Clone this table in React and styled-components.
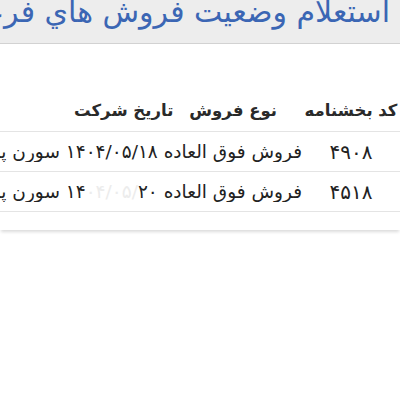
import React from 'react';
import styled, { createGlobalStyle } from 'styled-components';

const GlobalStyle = createGlobalStyle`
  html, body {
    margin: 0;
    padding: 0;
    background: #ffffff;
    overflow: hidden;
    font-family: "DejaVu Sans", sans-serif;
  }
`;

const Page = styled.div`
  width: 400px;
  height: 400px;
  overflow: hidden;
  direction: rtl;
  background: #ffffff;
`;

const Header = styled.header`
  height: 43px;
  background: #ededed;
  border-bottom: 1px solid #d2d2d2;
  overflow: hidden;
  padding-right: 10px;
`;

const Title = styled.h1`
  margin: -9px 0 0 0;
  font-size: 30px;
  font-weight: normal;
  line-height: 42px;
  color: #3b66b4;
  white-space: nowrap;
`;

const Card = styled.section`
  margin-top: 46px;
  background: #ffffff;
  padding-bottom: 18px;
  box-shadow: 0 3px 3px -1px rgba(0, 0, 0, 0.14);
`;

const Row = styled.div`
  display: grid;
  grid-template-columns: 98px 1fr;
  align-items: center;
  height: ${(p) => (p.$head ? '41px' : '39px')};
  border-bottom: 1px solid #e4e4e4;
  white-space: nowrap;
  font-size: ${(p) => (p.$head ? '16.5px' : '18.5px')};
  font-weight: ${(p) => (p.$head ? 'bold' : 'normal')};
  color: ${(p) => (p.$head ? '#2a2a2a' : '#222')};
`;

const CodeCell = styled.div`
  text-align: center;
  font-size: ${(p) => (p.$head ? 'inherit' : '20px')};
`;

const HeadGroup = styled.div`
  display: flex;
  gap: 16px;
  padding-right: 25px;
`;

const TitleCell = styled.div`
  overflow: hidden;
`;

const Faded = styled.span`
  color: #ececec;
`;

const rows = [
  { code: '۴۹۰۸', title: <>فروش فوق العاده ۱۴۰۴/۰۵/۱۸ سورن پلاس ایرانخودرو</> },
  {
    code: '۴۵۱۸',
    title: (
      <>
        فروش فوق العاده ۱۴<Faded>۰۴/۰۵/</Faded>۲۰ سورن پلاس ایرانخودرو
      </>
    ),
  },
];

export default function App() {
  return (
    <Page>
      <GlobalStyle />
      <Header>
        <Title>استعلام وضعیت فروش هاي فرعی</Title>
      </Header>
      <Card>
        <Row $head>
          <CodeCell $head>کد بخشنامه</CodeCell>
          <HeadGroup>
            <span>نوع فروش</span>
            <span>تاریخ شرکت</span>
          </HeadGroup>
        </Row>
        {rows.map((r) => (
          <Row key={r.code}>
            <CodeCell>{r.code}</CodeCell>
            <TitleCell>{r.title}</TitleCell>
          </Row>
        ))}
      </Card>
    </Page>
  );
}
